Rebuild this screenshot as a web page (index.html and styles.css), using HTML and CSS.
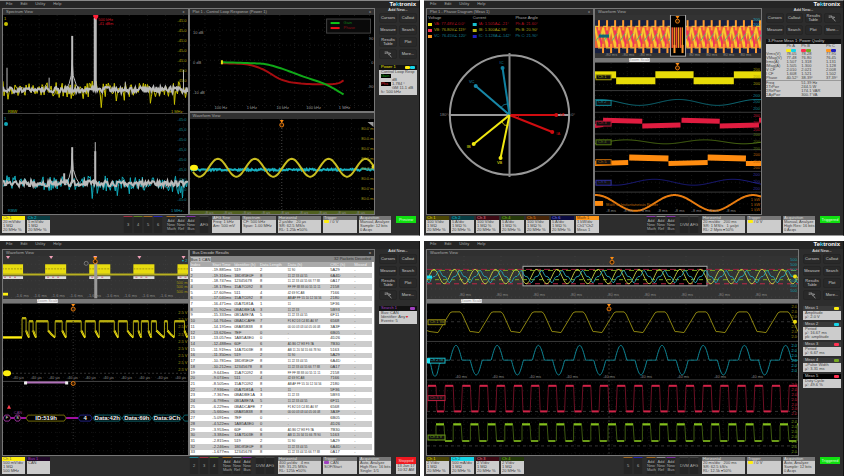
FILE: index.html
```html
<!DOCTYPE html>
<html lang="en">
<head>
<meta charset="utf-8">
<title>Oscilloscope Screens</title>
<link rel="stylesheet" href="styles.css">
</head>
<body>

<!-- Spectrum + control loop -->
<section class="scope framed">
  <header class="menubar">
    <button>File</button><button>Edit</button><button>Utility</button><button>Help</button>
    <span class="logo">Te<i>k</i>tronix</span>
  </header>
  <div class="main">
    <div class="panel">
      <h2>Spectrum View <span>x</span></h2>
      <svg id="spec1" class="half" data-view="3 15 184 100"></svg>
      <svg id="spec2" class="half" data-view="3 115 184 99"></svg>
    </div>
    <div class="stack">
      <div class="panel">
        <h2>Plot 1 - Control Loop Response (Power 1) <span>x</span></h2>
        <svg id="loop" class="half" data-view="189 15 185 95"></svg>
      </div>
      <div class="panel">
        <h2>Waveform View</h2>
        <svg id="sine" class="half" data-view="189 118 185 96"></svg>
      </div>
    </div>
    <aside class="side">
      <h3>Add New...</h3>
      <div class="buttons">
        <button>Cursors</button><button>Callout</button>
        <button>Measure</button><button>Search</button>
        <button>Results Table</button><button>Plot</button>
        <button aria-label="Zoom"><svg class="icon" viewBox="0 0 12 12"><path d="M1 3h5M1 5h3M5 4l5 1-3 2z M8 7l3 4"/></svg></button><button>More...</button>
      </div>
      <div class="card">
        <h4 class="yellow">Power 1 <b class="chip bg-yellow"></b><b class="chip bg-cyan"></b></h4>
        <div class="lines">
          <p>Control Loop Resp</p>
          <p><b class="tag green">Gain</b></p>
          <p class="in">dB</p>
          <p><b class="tag red">Phs</b> 1.784 °</p>
          <p class="in">GM 11.1 dB</p>
          <p>fc: 500 kHz</p>
        </div>
      </div>
    </aside>
  </div>
  <footer class="status">
    <div class="badge"><h5 class="bg-yellow">Ch 1</h5><p>20 mV/div</p><p>1 MΩ</p><p>20 MHz %</p></div>
    <div class="badge"><h5 class="teal">Ch 2</h5><p>5 mV/div</p><p>1 MΩ</p><p>20 MHz %</p></div>
    <div class="slots first">
      <button class="t-red">3</button><button class="t-green">4</button><button class="t-orange">5</button><button class="t-blue">6</button>
    </div>
    <div class="slots"><button class="t-orange">Add New Math</button><button class="t-gray">Add New Ref</button><button class="t-purple">Add New Bus</button></div>
    <div class="slots"><button>AFG</button></div>
    <div class="box w28"><h5>AFG Sine</h5><p>Freq: 1 kHz</p><p>Am: 500 mV</p></div>
    <div class="box w34"><h5>Spectrum</h5><p>CF: 500 kHz</p><p>Span: 1.00 MHz</p></div>
    <div class="box w43"><h5>Horizontal</h5><p>2 µs/div &nbsp; 20 µs</p><p>SR: 62.5 MS/s</p><p>RL: 1.25k ▾50%</p></div>
    <div class="box w34"><h5>Trigger</h5><p><b class="chip bg-yellow"></b> / 0 V</p></div>
    <div class="box w32"><h5>Acquisition</h5><p>Manual, Analyze</p><p>Sample: 12 bits</p><p>0 Acqs</p></div>
    <div class="run"><button>Preview</button></div>
  </footer>
</section>

<!-- Phasor diagram -->
<section class="scope framed">
  <header class="menubar">
    <button>File</button><button>Edit</button><button>Utility</button><button>Help</button>
    <span class="logo">Te<i>k</i>tronix</span>
  </header>
  <div class="main wide-side">
    <div class="panel">
      <h2>Plot 1 - Phasor Diagram (Meas 1) <span>x</span></h2>
      <svg id="phasor" class="tall" data-view="427 15 167 199"></svg>
    </div>
    <div class="panel">
      <h2>Waveform View</h2>
      <svg id="over2" class="short" data-view="595 15 165 42"></svg>
      <div class="strip"><b>Zoom Scale</b></div>
      <svg id="phases" class="tall" data-view="595 61 165 153"></svg>
    </div>
    <aside class="side">
      <h3>Add New...</h3>
      <div class="buttons">
        <button>Cursors</button><button>Callout</button><button>Results Table</button><button aria-label="Zoom"><svg class="icon" viewBox="0 0 12 12"><path d="M1 3h5M1 5h3M5 4l5 1-3 2z M8 7l3 4"/></svg></button>
        <button>Measure</button><button>Search</button><button>Plot</button><button>More...</button>
      </div>
      <div class="card results">
        <h4>3-Phase Meas 1: Power Quality</h4>
        <table>
          <tr><th></th><th>Ph A</th><th>Ph B</th><th>Ph C</th></tr>
          <tr><td></td><td><b class="chip bg-yellow"></b><b class="chip bg-cyan"></b></td><td><b class="chip bg-red"></b><b class="chip bg-green"></b></td><td><b class="chip bg-orange"></b><b class="chip bg-blue"></b></td></tr>
          <tr><td>Vrms(V)</td><td>78.05</td><td>78.28</td><td>77.95</td></tr>
          <tr><td>VMag(V)</td><td>77.48</td><td>76.80</td><td>76.45</td></tr>
          <tr><td>Irms(A)</td><td>1.507</td><td>1.318</td><td>1.131</td></tr>
          <tr><td>IMag(A)</td><td>1.505</td><td>1.300</td><td>1.128</td></tr>
          <tr><td>V CF</td><td>2.010</td><td>2.021</td><td>2.008</td></tr>
          <tr><td>I CF</td><td>1.608</td><td>1.521</td><td>1.502</td></tr>
          <tr><td>Phase</td><td>40.52°</td><td>38.39°</td><td>37.39°</td></tr>
          <tr class="rule"><td>Freq</td><td></td><td>51.39 Hz</td><td></td></tr>
          <tr><td>ΣTrPwr</td><td></td><td>244.5 W</td><td></td></tr>
          <tr><td>ΣRePwr</td><td></td><td>174.1 VAR</td><td></td></tr>
          <tr><td>ΣApPwr</td><td></td><td>300.7 VA</td><td></td></tr>
        </table>
      </div>
    </aside>
  </div>
  <footer class="status">
    <div class="badge"><h5 class="olive">Ch 1</h5><p>100 V/div</p><p>1 MΩ</p><p>20 MHz %</p></div>
    <div class="badge"><h5 class="teal">Ch 2</h5><p>5 A/div</p><p>1 MΩ %</p><p>20 MHz %</p></div>
    <div class="badge"><h5 class="maroon">Ch 3</h5><p>100 V/div</p><p>1 MΩ %</p><p>20 MHz %</p></div>
    <div class="badge"><h5 class="moss">Ch 4</h5><p>5 A/div</p><p>1 MΩ %</p><p>20 MHz %</p></div>
    <div class="badge"><h5 class="brown">Ch 5</h5><p>100 V/div</p><p>1 MΩ %</p><p>20 MHz %</p></div>
    <div class="badge"><h5 class="navy">Ch 6</h5><p>5 A/div</p><p>1 MΩ %</p><p>20 MHz %</p></div>
    <div class="badge"><h5 class="bg-orange">Math 1</h5><p>1 kW/div</p><p>Ch1*Ch2</p><p>Meas 1</p></div>
    <div class="slots first"><button class="t-purple">Add New Math</button><button class="t-gray">Add New Ref</button><button class="t-purple">Add New Bus</button></div>
    <div class="slots"><button>DVM</button><button>AFG</button></div>
    <div class="box w43"><h5>Horizontal</h5><p>20 ms/div &nbsp; 200 ms</p><p>SR: 1 MS/s &nbsp; 1 µs/pt</p><p>RL: 2 Mpts ▾50%</p></div>
    <div class="box w34"><h5>Trigger</h5><p><b class="chip bg-yellow"></b> / 0 V</p></div>
    <div class="box w32"><h5>Acquisition</h5><p>Manual, Analyze</p><p>High Res: 16 bits</p><p>0 Acqs</p></div>
    <div class="run"><button>Triggered</button></div>
  </footer>
</section>

<!-- Bus decode -->
<section class="scope">
  <header class="menubar">
    <button>File</button><button>Edit</button><button>Utility</button><button>Help</button>
  </header>
  <div class="main">
    <div class="panel">
      <h2>Waveform View</h2>
      <svg id="over3" class="short" data-view="3 256 184 47"></svg>
      <div class="strip"><b>Zoom Scale</b></div>
      <svg id="bus" class="tall" data-view="3 307 184 148"></svg>
    </div>
    <div class="panel decode">
      <h2>Bus Decode Results <span>x</span></h2>
      <div class="tabs"><button>Bus 1 CAN</button><span>32 Packets Decoded</span></div>
      <table id="packets">
        <thead><tr><th>Index</th><th>Start Time</th><th>Identifier (h)</th><th>Data Length</th><th>Data (h)</th><th>CRC (h)</th><th>Missed</th></tr></thead>
        <tbody></tbody>
      </table>
    </div>
    <aside class="side">
      <h3>Add New...</h3>
      <div class="buttons">
        <button>Cursors</button><button>Callout</button>
        <button>Measure</button><button>Search</button>
        <button>Results Table</button><button>Plot</button>
        <button aria-label="Zoom"><svg class="icon" viewBox="0 0 12 12"><path d="M1 3h5M1 5h3M5 4l5 1-3 2z M8 7l3 4"/></svg></button><button>More...</button>
      </div>
      <div class="card">
        <h4 class="purple">Search 1 <b class="chip bg-purple"></b></h4>
        <div class="lines"><p>Bus: CAN</p><p>Identifier: Any <b class="red">▾</b></p><p>Events: 5</p></div>
      </div>
    </aside>
  </div>
  <footer class="status">
    <div class="badge"><h5 class="bg-yellow">Ch 1</h5><p>500 mV/div</p><p>1 MΩ</p><p>500 MHz</p></div>
    <div class="badge"><h5 class="plum">Bus 1</h5><p>CAN</p></div>
    <div class="slots first"><button class="t-cyan">2</button><button class="t-red">3</button><button class="t-green">4</button></div>
    <div class="slots"><button class="t-orange">Add New Math</button><button class="t-gray">Add New Ref</button><button class="t-purple">Add New Bus</button></div>
    <div class="slots"><button>DVM</button><button>AFG</button></div>
    <div class="box w43"><h5>Horizontal</h5><p>400 µs/div &nbsp; 4 ms</p><p>SR: 31.25 MS/s</p><p>RL: 125k ▾50%</p></div>
    <div class="box w34"><h5>Trigger</h5><p><b class="chip bg-purple"></b> CAN</p><p>SOF/Start</p></div>
    <div class="box w32"><h5>Acquisition</h5><p>Auto, Analyze</p><p>High Res: 16 bits</p><p>Single: 1/1</p></div>
    <div class="run stopped"><button>Stopped</button><p>13 Jan 17</p><p>10:32 AM</p></div>
  </footer>
</section>

<!-- Zoomed waveforms -->
<section class="scope">
  <header class="menubar">
    <button>File</button><button>Edit</button><button>Utility</button><button>Help</button>
    <span class="logo">Te<i>k</i>tronix</span>
  </header>
  <div class="main single">
    <div class="panel">
      <h2>Waveform View</h2>
      <svg id="over4" class="short" data-view="427 256 371 42"></svg>
      <div class="strip"><b>Zoom Scale</b></div>
      <svg id="waves" class="tall" data-view="427 302 371 153"></svg>
    </div>
    <aside class="side">
      <h3>Add New...</h3>
      <div class="buttons">
        <button>Cursors</button><button>Callout</button>
        <button>Measure</button><button>Search</button>
        <button>Results Table</button><button>Plot</button>
        <button aria-label="Zoom"><svg class="icon" viewBox="0 0 12 12"><path d="M1 3h5M1 5h3M5 4l5 1-3 2z M8 7l3 4"/></svg></button><button>More...</button>
      </div>
      <div class="card"><h4>Meas 1 <b class="chip bg-yellow"></b></h4><div class="lines"><p>Amplitude</p><p>µ': 2.0 V</p></div></div>
      <div class="card"><h4>Meas 2 <b class="chip bg-cyan"></b></h4><div class="lines"><p>Period</p><p>µ': 16.67 ms</p><p>pk: amplitude</p></div></div>
      <div class="card"><h4>Meas 3 <b class="chip bg-red"></b></h4><div class="lines"><p>Period</p><p>µ': 6.67 ms</p></div></div>
      <div class="card"><h4>Meas 4 <b class="chip bg-green"></b></h4><div class="lines"><p>+Pulse Width</p><p>µ': 3.31 ms</p></div></div>
      <div class="card dark"><h4>Meas 5 <b class="chip bg-red"></b></h4><div class="lines"><p>Duty Cycle</p><p>µ': 49.6 %</p></div></div>
    </aside>
  </div>
  <footer class="status">
    <div class="badge"><h5 class="olive">Ch 1</h5><p>2 V/div</p><p>1 MΩ</p><p>20 MHz %</p></div>
    <div class="badge"><h5 class="bg-cyan">Ch 2</h5><p>500 mA/div</p><p>1 MΩ</p><p>20 MHz %</p></div>
    <div class="badge"><h5 class="maroon">Ch 3</h5><p>2 V/div</p><p>1 MΩ</p><p>20 MHz %</p></div>
    <div class="badge"><h5 class="moss">Ch 4</h5><p>2 V/div</p><p>1 MΩ</p><p>20 MHz %</p></div>
    <div class="slots first"><button class="t-orange">5</button><button class="t-blue">6</button></div>
    <div class="slots"><button class="t-orange">Add New Math</button><button class="t-gray">Add New Ref</button><button class="t-purple">Add New Bus</button></div>
    <div class="slots"><button>DVM</button><button>AFG</button></div>
    <div class="box w43"><h5>Horizontal</h5><p>20 ms/div &nbsp; 200 ms</p><p>SR: 62.5 kS/s</p><p>RL: 12.5k ▾50%</p></div>
    <div class="box w34"><h5>Trigger</h5><p><b class="chip bg-yellow"></b> / 0 V</p></div>
    <div class="box w32"><h5>Acquisition</h5><p>Auto, Analyze</p><p>Sample: 12 bits</p><p>0 Acqs</p></div>
    <div class="run"><button>Triggered</button></div>
  </footer>
</section>

<script src="scope.js"></script>
</body>
</html>
```

FILE: styles.css
```css
* { box-sizing: border-box; }
body {
  margin: 0;
  min-height: 100vh;
  display: grid;
  grid-template-columns: 1fr 1fr;
  grid-template-rows: 236fr 235fr;
  gap: 5px 4px;
  background: #fff;
  color: #aaa;
  font: 4px/4px "Liberation Sans", Arial, sans-serif;
}
h2, h3, h4, h5, p { margin: 0; font-size: 4px; font-weight: normal; }
button {
  border: 0;
  padding: 0;
  margin: 0;
  background: none;
  color: inherit;
  font: inherit;
}

.scope {
  display: flex;
  flex-direction: column;
  min-width: 0;
  min-height: 0;
  background: #2d2d2d;
  border-right: 1px solid #111;
}
.framed { border-top: 1px solid #888; border-bottom: 1px solid #999; }

.menubar {
  display: flex;
  align-items: center;
  gap: 8px;
  height: 8px;
  padding: 0 3px 2px 6px;
  background: #252525;
}
.framed .menubar { height: 7px; }
.logo {
  margin-left: auto;
  color: #fff;
  font-size: 6px;
  line-height: 6px;
  font-weight: bold;
}
.logo i { color: #3bc4e0; font-style: normal; }

.main {
  flex: 1;
  min-height: 0;
  display: grid;
  grid-template-columns: 1fr 1fr 44px;
  grid-template-rows: minmax(0, 1fr);
  padding-left: 2px;
}
.wide-side { grid-template-columns: 1fr 1fr 81px; }
.single { grid-template-columns: 1fr 44px; }
.stack { display: flex; flex-direction: column; min-height: 0; min-width: 0; }
.stack .panel { flex: 1 1 0; }

.panel {
  display: flex;
  flex-direction: column;
  min-width: 0;
  min-height: 0;
  border: 1px solid #777;
  background: #000;
}
.panel h2 {
  display: flex;
  justify-content: space-between;
  height: 6px;
  flex: none;
  padding: 1px 3px;
  background: #303030;
}
.panel > svg { display: block; width: 100%; min-height: 0; }
.half { flex: 1 1 0; }
.short { flex: 43 1 0; background: #333; }
.tall { flex: 150 1 0; }

.strip {
  flex: none;
  height: 5px;
  padding-left: 34px;
  background: #777;
  border-bottom: 1px solid #444;
}
.strip b {
  display: block;
  width: 21px;
  border-radius: 1px;
  background: #eee;
  color: #999;
  font-weight: normal;
  text-align: center;
  white-space: nowrap;
}

.side { padding: 0 2px 0 4px; }
.side h3 { height: 5px; color: #eee; text-align: center; }
.buttons { display: grid; grid-template-columns: repeat(2, 1fr); gap: 2px; }
.wide-side .buttons { grid-template-columns: repeat(4, 1fr); }
.buttons button {
  height: 10px;
  border-radius: 2px;
  background: #292929;
  border: 1px solid #252525;
  color: #ccc;
  white-space: normal;
}
.icon { display: block; width: 8px; height: 8px; margin: 0 auto; fill: none; stroke: #bbb; }

.card { margin-top: 2px; background: #ccc; color: #444; }
.buttons + .card { margin-top: 6px; }
.wide-side .buttons + .card { margin-top: 4px; }
.card h4 {
  display: flex;
  height: 5px;
  padding: 0 2px;
  background: #3a3a3a;
  color: #ccc;
}
.card.dark h4 { background: #000; }
.card .chip { margin-top: 1px; }
.card h4 .chip:first-of-type { margin-left: auto; }
.card .yellow { background: #111; color: #f0e000; }
.card .purple { background: #111; color: #a040c0; }
.lines { padding: 0 2px 1px; white-space: nowrap; }
.lines .in { padding-left: 11px; }
.lines .tag { display: inline-block; width: 10px; background: #000; font-weight: normal; }
.results h4 { background: #111; }
.results table { width: 100%; border-collapse: collapse; }
.results th, .results td { padding: 0; height: 4px; font-weight: normal; text-align: left; white-space: nowrap; }
.results .rule td { border-top: 1px solid #999; }

.chip { display: inline-block; width: 5px; height: 3px; border-radius: 1px; vertical-align: top; }
.green { color: #1fae1f; }
.red { color: #e02030; }
.bg-yellow { background: #ffee10; color: #665; }
.bg-cyan { background: #16d5e8; color: #155; }
.bg-red { background: #ff3050; }
.bg-green { background: #76a820; }
.bg-orange { background: #ff981c; color: #630; }
.bg-blue { background: #2020c0; }
.bg-purple { background: #a040c0; }

.status {
  display: flex;
  height: 20px;
  flex: none;
  padding: 1px 3px 2px 2px;
  white-space: nowrap;
}
.badge, .box { overflow: hidden; background: #ccc; color: #444; }
.badge { width: 23px; margin-right: 2px; }
.badge h5, .box h5 { height: 4px; padding-left: 1px; }
.badge p, .box p { padding-left: 1px; }
.box { margin-right: 2px; }
.box h5 { background: #777; color: #ddd; }
.w28 { width: 28px; }
.w32 { width: 32px; }
.w34 { width: 34px; }
.w43 { width: 43px; }
.olive { background: #4a4505; color: #e8dc10; }
.teal { background: #083c42; color: #16c5d8; }
.maroon { background: #3c0a14; color: #f08090; }
.moss { background: #24380a; color: #80c020; }
.brown { background: #452408; color: #f09020; }
.navy { background: #0a0a40; color: #8080f0; }
.plum { background: #200828; color: #a040c0; }

.slots { display: flex; margin-right: 3px; }
.slots.first { margin-left: auto; }
.slots button {
  width: 10px;
  border: 1px solid #2b2b2b;
  border-top-color: #444;
  border-width: 1px 1px 0;
  background: #252525;
  white-space: normal;
}
.slots .t-red { border-top-color: #a03040; }
.slots .t-green { border-top-color: #608020; }
.slots .t-orange { border-top-color: #a06820; }
.slots .t-blue { border-top-color: #2828b0; }
.slots .t-cyan { border-top-color: #208090; }
.slots .t-gray { border-top-color: #888; }
.slots .t-purple { border-top-color: #8030a0; }

.run { width: 20px; margin-left: 3px; }
.run button { display: block; width: 100%; height: 7px; background: #10e010; color: #dfd; }
.run.stopped { background: #ccc; color: #444; text-align: center; }
.stopped button { background: #f01820; color: #fcc; }

.decode { background: #fff; color: #333; }
.decode h2 { color: #ccc; }
.tabs {
  display: flex;
  justify-content: space-between;
  flex: none;
  height: 6px;
  padding: 1px 3px 0 1px;
  background: #888;
}
.tabs button { width: 20px; background: #bbb; }
#packets { flex: 1; min-height: 0; display: flex; flex-direction: column; margin-right: 2px; }
#packets thead { flex: none; background: #aaa; color: #eee; }
#packets tbody { flex: 1; min-height: 0; display: flex; flex-direction: column; }
#packets tr {
  flex: 1;
  display: grid;
  grid-template-columns: 22fr 22fr 26fr 28fr 43fr 24fr 18fr;
  align-items: center;
  padding-left: 1px;
  white-space: nowrap;
}
#packets thead tr { height: 5px; }
#packets tbody tr:nth-child(even) { background: #ccc; }
#packets th, #packets td { padding: 0; min-width: 0; font-weight: normal; text-align: left; }
#packets .data { font-size: 3px; }
```

FILE: scope.js
```js
var NS = 'http://www.w3.org/2000/svg';
var seed;

// repeatable noise, -1..1
function noise() {
  seed = (seed * 16807) % 2147483647;
  return seed / 1073741823.5 - 1;
}

function Plot(id) {
  this.svg = document.getElementById(id);
  this.svg.textContent = '';
  this.v = this.svg.dataset.view.split(' ').map(Number);
  var box = this.svg.getBoundingClientRect();
  this.sx = box.width / this.v[2];
  this.sy = box.height / this.v[3];
}
Plot.prototype = {
  X: function (x) { return (x - this.v[0]) * this.sx; },
  Y: function (y) { return (y - this.v[1]) * this.sy; },
  add: function (tag, attrs) {
    var el = document.createElementNS(NS, tag);
    for (var k in attrs) el.setAttribute(k, attrs[k]);
    this.svg.appendChild(el);
    return el;
  },
  line: function (pts, color, width, dash) {
    var p = this;
    this.add('polyline', {
      points: pts.map(function (q) { return p.X(q[0]) + ',' + p.Y(q[1]); }).join(' '),
      fill: 'none', stroke: color, 'stroke-width': width || 1, 'stroke-dasharray': dash || 'none'
    });
  },
  rect: function (x, y, w, h, fill, stroke) {
    this.add('rect', { x: this.X(x), y: this.Y(y), width: w * this.sx, height: h * this.sy, fill: fill, stroke: stroke || 'none' });
  },
  dot: function (x, y, r, fill, stroke) {
    this.add('circle', { cx: this.X(x), cy: this.Y(y), r: r, fill: fill, stroke: stroke || 'none' });
  },
  text: function (x, y, s, color, size, anchor) {
    this.add('text', {
      x: this.X(x), y: this.Y(y) + 1, fill: color, 'font-size': size || 4,
      'font-weight': size > 4 ? 'bold' : 'normal', 'text-anchor': anchor || 'middle'
    }).textContent = s;
  },
  fn: function (x0, x1, f, color, width, step) {
    var pts = [];
    for (var x = x0; x <= x1; x += step || 1) pts.push([x, f(x)]);
    this.line(pts, color, width);
  },
  // smooth curve through the points
  curve: function (pts, color, width) {
    var out = [];
    for (var i = 0; i < pts.length - 1; i++) {
      var a = pts[i - 1] || pts[i], b = pts[i], c = pts[i + 1], d = pts[i + 2] || c;
      for (var t = 0; t < 1; t += 0.1) {
        out.push([0, 1].map(function (k) {
          return 0.5 * (2 * b[k] + (c[k] - a[k]) * t + (2 * a[k] - 5 * b[k] + 4 * c[k] - d[k]) * t * t + (3 * b[k] - a[k] - 3 * c[k] + d[k]) * t * t * t);
        }));
      }
    }
    out.push(pts[pts.length - 1]);
    this.line(out, color, width);
  },
  grid: function (dx, dy, color) {
    var v = this.v, x, y;
    for (x = v[0] + dx; x < v[0] + v[2]; x += dx) this.line([[x, v[1]], [x, v[1] + v[3]]], color, 1, '1 3');
    for (y = v[1] + dy; y < v[1] + v[3]; y += dy) this.line([[v[0], y], [v[0] + v[2], y]], color, 1, '1 3');
  },
  column: function (x, y0, y1, step, color, label) {
    for (var y = y0; y <= y1; y += step) this.text(x, y, label, color, 4, 'end');
  },
  row: function (y, x0, x1, step, label) {
    for (var x = x0; x <= x1; x += step) this.text(x, y, label, '#888');
  },
  trigger: function (x, y) {
    this.add('path', { d: 'M' + (this.X(x) - 2) + ' ' + this.Y(y) + 'h4l-2 3z', fill: '#ff8c10' });
    this.dot(x, y + 5, 2, '#301800', '#e07810');
  }
};

function sine(mid, amp, peak, period) {
  return function (x) { return mid - amp * Math.cos((x - peak) * 2 * Math.PI / period); };
}

function spectrum(id, base, color, peaks, badgeY) {
  var p = new Plot(id), n = [], x;
  p.grid(18, 10, '#161616');
  seed = id === 'spec1' ? 4711 : 815;
  for (x = 3; x <= 187; x++) n.push([x, base + noise() * 3]);
  p.line(n.map(function (q) { return [q[0], q[1] + noise() * 6 + (noise() > 0.7 ? 12 * Math.abs(noise()) : 0)]; }), color, 1);
  // foot of the main peak
  p.line([[66, base], [69, base - 6], [71, base - 14], [72, base - 30], [73, base - 14], [76, base - 5], [79, base]], '#bbb', 1);
  p.line(n, '#bbb', 2);
  peaks.forEach(function (k) { p.line([[k[0], base], [k[0], k[1]]], '#bbb', k[2]); });
  p.dot(6, badgeY, 2, color);
  p.text(4, badgeY - 5, '1', color, 4, 'start');
  return p;
}

function draw() {
  var p, i, x, y, c;

  // spectrum view
  p = spectrum('spec1', 90, '#c8c000', [[7, 68, 1], [49, 78, 1], [72, 36, 2], [95, 18, 3], [125, 82, 1], [183, 70, 1]], 24);
  p.column(186, 21, 81, 10, '#b0a800', '-45.0');
  p.add('path', { d: 'M' + (p.X(95) - 2) + ' ' + p.Y(15) + 'h5v2l-2 3l-3 -3z', fill: '#ff2038' });
  p.text(98, 20, '500 kHz', '#d01020', 4, 'start');
  p.text(98, 24, '-41 dBm', '#d01020', 4, 'start');
  p.text(8, 112, 'RBW', '#c8c000', 4, 'start');
  p.text(182, 112, '1 MHz', '#b0a800', 4, 'end');
  p.line([[3, 114], [187, 114]], '#444');
  p = spectrum('spec2', 183, '#10a8b8', [[64, 173, 2], [72, 147, 2], [95, 151, 2], [95, 142, 1]], 124);
  p.column(186, 120, 200, 10, '#108090', '-45.0');
  p.text(8, 211, 'RBW', '#109aa8', 4, 'start');
  p.text(182, 211, '1 MHz', '#109aa8', 4, 'end');

  // control loop response
  p = new Plot('loop');
  p.grid(15, 15, '#1a1a1a');
  p.curve([[220, 63], [245, 64], [262, 69], [280, 79], [298, 83], [325, 84], [337, 83], [343, 80]], '#a80c10', 2);
  p.curve([[221, 62], [252, 63], [265, 64], [280, 68], [302, 76], [325, 84], [343, 94]], '#10a818', 2);
  p.rect(220, 60, 2, 4, '#e8e010');
  p.rect(326, 19, 44, 14, '#0a0a0a', '#444');
  p.rect(330, 22, 9, 2, '#10c818');
  p.rect(330, 27, 9, 2, '#f01018');
  p.text(343, 23, 'Gain', '#108018', 4, 'start');
  p.text(343, 28, 'Phase', '#901018', 4, 'start');
  ['10 dB', '0 dB', '-10 dB'].forEach(function (s, k) { p.text(192, 33 + k * 30, s, '#999', 4, 'start'); });
  ['90', '0', '-90'].forEach(function (s, k) { p.text(373, 39 + k * 24, s, '#999', 4, 'end'); });
  ['100 Hz', '1 kHz', '10 kHz', '100 kHz', '1 MHz'].forEach(function (s, k) { p.text(220 + k * 31, 108, s, '#999'); });

  // time domain sine
  p = new Plot('sine');
  p.grid(18, 10, '#181818');
  p.line([[281, 118], [281, 210]], '#444', 1, '1 2');
  seed = 99;
  p.fn(189, 374, function () { return 169 + noise(); }, '#18b0c0', 2);
  p.fn(192, 374, sine(167, 9, 217, 37), '#c8bc20', 2);
  p.column(373, 128, 206, 10, '#a09810', '80.0 m');
  p.add('ellipse', { cx: p.X(193), cy: p.Y(167), rx: 4, ry: 3, fill: '#fff010' });
  p.dot(373, 166, 2, '#e8d820');
  p.trigger(281, 119);
  p.add('path', { d: 'M' + p.X(367) + ' ' + p.Y(121) + 'h6v5z', fill: '#999' });
  p.rect(189, 210, 185, 4, '#506020');
  p.row(212, 208, 370, 19, '-8 µs');

  // phasor diagram
  p = new Plot('phasor');
  ['Voltage', 'Current', 'Phase Angle'].forEach(function (s, k) { p.text([428, 473, 516][k], 18, s, '#aaa', 4, 'start'); });
  c = [['#b01020', '#f8f010', '#18c0d0'], ['#a8a010', '#ff3050', '#c0b810'], ['#147c90', '#ff981c', '#2020c0']];
  for (i = 0; i < 3; i++) {
    y = 24 + i * 6;
    p.rect(428, y - 1, 4, 3, c[i][1]);
    p.rect(473, y - 1, 4, 3, c[i][2]);
    p.text(434, y, ['VA: 77.48V∠0.0°', 'VB: 76.80V∠119°', 'VC: 76.45V∠120°'][i], c[i][0], 4, 'start');
    p.text(479, y, ['IA: 1.505A∠-21°', 'IB: 1.300A∠98°', 'IC: 1.128A∠-142°'][i], c[i][0], 4, 'start');
    p.text(516, y, ['Ph A: 21.60°', 'Ph B: 20.90°', 'Ph C: 21.90°'][i], c[i][0], 4, 'start');
  }
  p.add('circle', { cx: p.X(510), cy: p.Y(115), r: 60 * Math.min(p.sx, p.sy), fill: 'none', stroke: '#999', 'stroke-width': 2 });
  p.line([[449, 115], [571, 115]], '#999', 2);
  p.line([[510, 53], [510, 177]], '#888', 2);
  [[557, 115, '#d00c10', 'VA', 563, 115], [553, 132, '#d00c10', 'IA', 559, 134], [503, 68, '#1080a0', 'IC', 502, 63],
   [476, 86, '#1888a8', 'VC', 472, 82], [474, 144, '#f0e810', 'IB', 469, 147], [501, 158, '#f0e810', 'VB', 500, 163]].forEach(function (a) {
    p.line([[510, 115], [a[0], a[1]]], a[2], 2);
    p.dot(a[0], a[1], 2, a[2]);
    p.text(a[4], a[5], a[3], a[2]);
  });
  p.curve([[501, 108], [504, 105], [508, 104]], '#1888a8', 1);
  p.curve([[502, 121], [505, 125], [509, 125]], '#f0e810', 1);
  p.curve([[518, 115], [519, 117], [517, 118]], '#d00c10', 1);
  p.text(444, 115, '180°', '#888');
  p.text(574, 115, '0°', '#888');

  // three phase overview
  p = new Plot('over2');
  p.rect(595, 20, 165, 32, '#182040');
  p.rect(595, 26, 165, 21, '#e86038');
  for (x = 595; x < 760; x += 8) {
    p.line([[x, 27], [x + 4, 46], [x + 8, 28]], '#f8c830', 2);
    p.line([[x + 3, 27], [x + 7, 46]], '#f03060', 2);
    p.line([[x + 1, 40], [x + 6, 33]], '#60b070', 1);
    p.line([[x + 4, 20], [x + 4, 30]], '#ff9c30', 2);
    p.line([[x + 8, 43], [x + 8, 52]], '#ff9c30', 2);
    p.line([[x, 26], [x + 4, 26]], '#f8d040', 1);
    p.line([[x + 3, 47], [x + 7, 47]], '#f8d040', 1);
  }
  p.rect(670, 15, 15, 40, '#000', '#aaa');
  for (x = 672; x < 684; x += 4) {
    p.line([[x, 27], [x, 47]], '#f05030', 2);
    p.line([[x + 2, 27], [x + 2, 47]], '#e8a020', 1);
  }
  p.line([[674, 44], [674, 52]], '#ff9c30', 2);
  p.line([[682, 44], [682, 52]], '#ff9c30', 2);
  p.trigger(677, 16);
  p.rect(599, 34, 10, 3, '#106878');
  p.column(759, 20, 25, 5, '#18b0c0', '200');
  p.row(54, 611, 660, 17, '-80 ms');
  p.row(54, 694, 750, 17, '80 ms');

  // three phase waveforms
  p = new Plot('phases');
  p.grid(16, 11, '#141414');
  [89, 111, 133, 149, 171, 192].forEach(function (y) { p.line([[595, y], [760, y]], '#3a3a3a'); });
  function bands(list, color) {
    list.forEach(function (b) {
      p.line([[b[0], b[2]], [b[1], b[3]]], color, b[4]);
    });
  }
  bands([[595, 616, 73, 73, 7], [616, 655, 79, 79, 7], [655, 693, 73, 73, 7], [693, 733, 79, 79, 7], [733, 760, 73, 73, 7]], '#e8dc08');
  bands([[595, 603, 125, 124, 4], [603, 642, 119, 120, 5], [642, 680, 125, 124, 5], [681, 719, 119, 120, 5], [719, 758, 125, 124, 5], [758, 760, 119, 119, 5]], '#e01c40');
  bands([[595, 628, 163, 162, 5], [629, 668, 157, 158, 6], [668, 707, 163, 162, 5], [707, 745, 157, 158, 6], [745, 760, 163, 163, 5]], '#ff8c10');
  p.fn(595, 760, sine(101, 3, 678, 78), '#0f6f7c', 1);
  p.fn(595, 760, sine(141, 2, 704, 78), '#4c6c14', 1);
  p.fn(595, 760, sine(182, 3, 732, 78), '#1c1c80', 1);
  p.fn(595, 760, sine(203, 8, 596, 78), '#e87c10', 2);
  [[75, 'Ch 1', '#a8a008'], [101, 'Ch 2', '#108898'], [122, 'Ch 3', '#c01838'], [141, 'Ch 4', '#587c14'], [161, 'Ch 5', '#b86408'], [182, 'Ch 6', '#3030a0']].forEach(function (k) {
    p.rect(596, k[0] - 2, 15, 5, '#101010', k[2]);
    p.text(598, k[0], k[1], k[2], 4, 'start');
    p.column(759, k[0] - 7, k[0] + 7, 7, k[2], '200');
  });
  p.rect(595, 201, 8, 5, '#ff8c10');
  p.text(606, 205, 'Math 1: Instantaneous Power', '#b86408', 4, 'start');
  p.column(759, 200, 210, 5, '#b86408', '1 kW');
  p.row(211, 611, 745, 17, '-8 ms');
  p.trigger(677, 61);

  // CAN overview
  p = new Plot('over3');
  p.grid(18, 9, '#3c3c3c');
  [2, 45, 89, 133, 177].forEach(function (x) {
    p.rect(x, 265, 21, 11, '#e8dc10');
    p.line([[x, 270], [x + 21, 270]], '#a89c10', 1, '2 1');
    p.rect(x, 278, 21, 3, '#ddd');
    p.line([[x + 2, 279], [x + 17, 279]], '#c06080', 1, '2 3');
    p.add('path', { d: 'M' + (p.X(x + 6) - 2) + ' ' + p.Y(256) + 'h4l-2 3z', fill: '#f0a0b8' });
  });
  p.line([[3, 276], [187, 276]], '#b8b020', 2);
  p.rect(94, 262, 3, 40, '#999');
  p.trigger(95, 257);
  p.dot(86, 264, 2, 'none', '#777');
  p.rect(3, 296, 5, 3, '#fff010');
  p.column(187, 285, 295, 5, '#a09810', '500 m');
  p.column(187, 261, 261, 4, '#18b0c0', '▾ 2');
  p.row(300, 22, 170, 18, '-1.6 ms');

  // CAN waveform
  p = new Plot('bus');
  p.grid(18, 9, '#141414');
  // each pair: rise, start of decay
  c = [[22, 26], [29, 33], [36, 48], [55, 62], [66, 81], [85, 95], [99, 114], [118, 127], [133, 138], [141, 148], [151, 156], [164, 167], [174, 184]];
  y = [[3, 339], [22, 339]];
  c.forEach(function (k, n) {
    var top = n ? 324 : 321, end = n < 12 ? c[n + 1][0] : 187;
    y.push([k[0], top], [k[1], top], [k[1], 333], [k[1] + (end - k[1]) / 2, 337], [end, 339]);
    p.line([[k[0], top], [k[1], top]], '#ffee10', 2);
    p.line([[k[1], 333], [k[1] + (end - k[1]) / 2, 337], [end, 340]], '#ffee10', 2);
  });
  p.line(y, '#a8a010', 1);
  p.line([[3, 340], [22, 340]], '#ffee10', 2);
  p.column(187, 316, 374, 7, '#a09810', '2.5 V');
  p.trigger(73, 307);
  p.add('ellipse', { cx: p.X(7), cy: p.Y(375), rx: 4, ry: 3, fill: '#fff010' });
  p.line([[12, 375], [187, 375]], '#333', 1, '2 2');
  p.row(380, 18, 180, 18, '-40 µs');
  p.line([[3, 383], [187, 383]], '#444');
  p.line([[25, 384], [67, 384]], '#b070b8', 2);
  p.rect(24, 383, 3, 3, '#eee');
  p.rect(65, 383, 3, 3, '#eee');
  p.line([[73, 309], [73, 440]], '#333', 1, '1 2');
  p.dot(73, 385, 2, '#301800', '#e07810');
  p.add('path', { d: 'M' + p.X(9) + ' ' + p.Y(406) + 'l2 4h-4z', fill: '#ff4050' });
  p.text(18, 414, 'CAN', '#803890');
  p.line([[3, 419], [78, 419]], '#a010a0', 2);
  function cell(x0, x1, label, color, size) {
    var a = p.X(x0), b = p.X(x1), m = p.Y(419);
    p.add('path', { d: 'M' + a + ' ' + m + 'l2 -3H' + (b - 2) + 'l2 3l-2 3H' + (a + 2) + 'z', fill: '#000', stroke: color });
    p.text((x0 + x1) / 2, size ? 420 : 419, label, '#eee', size);
  }
  cell(3, 11, 'F', '#903090');
  cell(14, 21, 'S', '#903090');
  cell(26, 66, 'ID:519h', '#706808', 6);
  cell(78, 92, '4', '#202080', 6);
  cell(93, 121, 'Data:42h', '#0c6068', 6);
  cell(122, 151, 'Data:69h', '#0c6068', 6);
  cell(152, 181, 'Data:9Ch', '#0c6068', 6);
  cell(182, 196, '', '#0c6068');

  // zoom overview
  p = new Plot('over4');
  p.grid(37, 8, '#404040');
  p.rect(523, 266, 184, 19, '#000', '#aaa');
  p.line([[427, 269], [798, 269]], '#a02040', 1, '6 3');
  p.line([[427, 283], [798, 283]], '#c02848', 1, '5 4');
  p.line([[431, 270], [798, 270]], '#78a820', 1, '5 4');
  p.line([[427, 279], [798, 279]], '#78a820', 1, '4 4');
  p.fn(427, 798, sine(276, 7, 434, 20.5), '#b8c040', 1);
  p.fn(427, 798, function (x) { return 276 - 6 * Math.pow(Math.sin((x - 434) * 2 * Math.PI / 20.5), 3); }, '#2898a8', 1);
  p.rect(427, 275, 5, 3, '#18e0f0');
  p.trigger(612, 257);
  p.column(797, 260, 292, 5, '#109aa8', '500');
  p.dot(795, 276, 2, '#f0e010');
  p.row(294, 465, 780, 37, '-80 ms');

  // four channels
  p = new Plot('waves');
  p.grid(37, 8, '#141414');
  [340, 379, 418].forEach(function (y) { p.line([[427, y], [798, y]], '#3a3a3a'); });
  [320, 359, 411, 446].forEach(function (y) { p.line([[427, y], [798, y]], '#333', 1, '3 3'); });
  p.line([[609, 302], [609, 455]], '#333', 1, '2 2');
  c = [[427, 329], [430, 330]];
  for (x = 438; x < 800; x += 41) c.push([x, 331], [x + 12, 311], [x + 14, 310], [x + 22, 310], [x + 24, 312], [x + 32, 330], [x + 34, 330]);
  p.line(c, '#8c8410', 1);
  p.fn(440, 798, function (x) {
    var t = ((x - 435) % 41.2 + 41.2) % 41.2;
    if (t > 35) return 359 + 15 * Math.cos((41.2 - t) / 6 * Math.PI / 2);
    if (t < 6) return 359 + 15 * Math.cos(t / 6 * Math.PI / 2);
    if (t > 15 && t < 27) return 359 - 15 * Math.cos((t - 21) / 6 * Math.PI / 2);
    return 359;
  }, '#0f8898', 1, 0.5);
  p.curve([[430, 360], [433, 373], [435, 375], [437, 373], [440, 360]], '#0f8898', 1);
  for (x = 428; x < 798; x += 17.2) {
    p.line([[x - 1, 411], [x, 385], [x + 8, 385], [x + 9, 411], [x + 16, 411]], '#6c1024', 1);
    p.line([[x, 385], [x + 8, 385]], '#d02448', 2);
    p.line([[x + 9, 411], [x + 16, 411]], '#d02448', 2);
    y = x + 8;
    p.line([[y, 441], [y, 425], [y + 8, 425], [y + 9, 441], [y + 17, 441]], '#3c5810', 1);
    p.line([[y, 424], [y + 8, 424]], '#84c01c', 2);
    p.line([[y + 9, 441], [y + 16, 441]], '#6c9c18', 2);
  }
  [[320, 'Ch 1 Vo', '#988f10', 305, 335], [359, 'Ch 2 Io', '#18b8c8', 345, 374], [397, 'Ch 3 V', '#c02040', 384, 414], [437, 'Ch 4 V', '#70a018', 422, 452]].forEach(function (k) {
    p.rect(428, k[0] - 2, 17, 5, '#101010', k[2]);
    p.text(430, k[0], k[1], k[2], 4, 'start');
    p.column(797, k[3], k[4], 5, k[2], '2.0');
  });
  p.rect(427, 357, 3, 5, '#18e0f0');
  p.dot(795, 320, 2, '#f0e010');
  p.trigger(609, 302);
  p.row(376, 461, 780, 37, '-40 ms');
}

var packets = [
  ['519', 2, '51 90', '5A29'], ['1BD85E0F', 8, '11 22 33 44 55', '6A4D'], ['12345678', 8, '11 22 33 44 55 66 77 88', '0A17'],
  ['15A7C092', 8, 'FF FF 88 88 00 55 11 11', '2158'], ['511', 4, '42 69 9C AB', '7166'], ['15A7C092', 8, 'AB AF FF 55 10 12 34 56', '2180'],
  ['05A7D81A', 1, '11', '5F36'], ['0BADBE1A', 3, '11 22 33', '5B93'], ['0B1A8E7A', 5, '11 22 33 44 55', '6F11'],
  ['0BADCAFE', 7, 'F1 E2 D3 C4 B5 A6 97', '6568'], ['08A85B38', 8, '00 00 03 03 04 05 06 08', '3A3F'], ['7EF', 0, '-', '6B05'],
  ['1AB5A3E0', 0, '-', '4D26'], ['60F', 6, 'A5 B6 C7 E8 F9 7A', '7B30'], ['14A7D03E', 8, 'AB 11 20 34 55 66 78 90', '5163']
];

function fillPackets() {
  var html = '';
  for (var i = 0; i < 33; i++) {
    var k = packets[i % packets.length];
    html += '<tr><td>' + (i + 1) + '</td><td>' + (-19.885 + i * 0.569).toFixed(3) + 'ms</td><td>' + k[0] + '</td><td>' +
      k[1] + '</td><td class="data">' + k[2] + '</td><td>' + k[3] + '</td><td>-</td></tr>';
  }
  document.querySelector('#packets tbody').innerHTML = html;
}

fillPackets();
draw();
window.onresize = draw;
```
